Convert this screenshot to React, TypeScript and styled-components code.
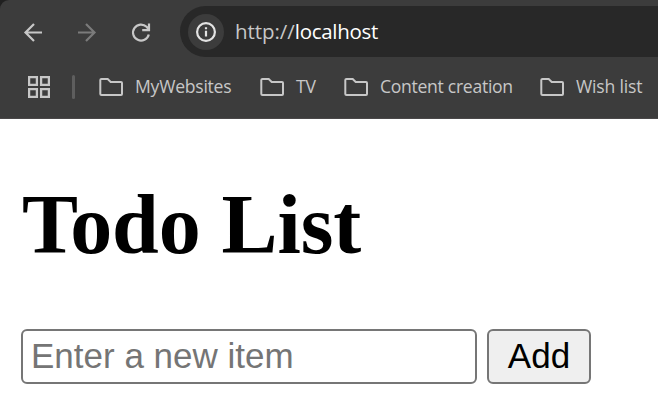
import React from "react";
import styled, { createGlobalStyle } from "styled-components";

const GlobalStyle = createGlobalStyle`
  html, body { margin: 0; background: #fff; }
  body { overflow: hidden; }
  *, *::before, *::after { box-sizing: border-box; }
`;

const Window = styled.div`
  width: 658px;
  height: 412px;
  overflow: hidden;
`;

const Chrome = styled.header`
  height: 119px;
  background: #3c3c3c;
  border-top-left-radius: 9px;
  border-bottom: 1px solid #4a4849;
  font-family: "Open Sans", "Noto Sans", sans-serif;
  overflow: hidden;
`;

const ChromeBackdrop = styled.div`
  background: #202020;
`;

const Toolbar = styled.div`
  display: flex;
  height: 57px;
  padding: 6px 0 0 20px;
`;

const NavButton = styled.span<{ $dim?: boolean }>`
  display: flex;
  align-items: center;
  width: 54px;
  height: 51px;
  color: ${(p) => (p.$dim ? "#7b7b7b" : "#c7c7c7")};
`;

const AddressBar = styled.div`
  display: flex;
  align-items: center;
  flex: 1;
  margin-left: -2px;
  padding-left: 8px;
  height: 51px;
  border-radius: 25.5px 0 0 25.5px;
  background: #282828;
`;

const SiteInfo = styled.span`
  display: flex;
  align-items: center;
  justify-content: center;
  width: 36px;
  height: 36px;
  border-radius: 50%;
  background: #3c3c3c;
  color: #e3e3e3;
`;

const Url = styled.span`
  margin-left: 11px;
  font-size: 20.5px;
  line-height: 51px;
  color: #c7c7c7;
  white-space: nowrap;
`;

const Scheme = styled.span`
  letter-spacing: -0.05px;
`;

const Host = styled.span`
  color: #fff;
  letter-spacing: -0.3px;
`;

const Bookmarks = styled.nav`
  display: flex;
  align-items: center;
  height: 60px;
  padding-left: 28px;
  color: #c7c7c7;
`;

const Divider = styled.i`
  width: 3px;
  height: 24px;
  margin: 0 24px 0 22px;
  border-radius: 1.5px;
  background: #5e5e5e;
`;

const Bookmark = styled.span<{ $width: number; $spacing: number }>`
  display: flex;
  align-items: center;
  flex: none;
  gap: 11px;
  width: ${(p) => p.$width}px;
  font-size: 17.6px;
  line-height: 24px;
  letter-spacing: ${(p) => p.$spacing}px;
  white-space: nowrap;
`;

const BookmarkLabel = styled.span`
  padding-bottom: 2px;
`;

const Page = styled.main`
  padding: 58px 21px 0;
`;

const Title = styled.h1`
  margin: 0 0 56px;
  padding-left: 1px;
  font: bold 84px/96px "Liberation Serif", "Times New Roman", serif;
  letter-spacing: -0.1px;
  color: #000;
`;

const Form = styled.form`
  display: flex;
  gap: 10px;
`;

const ItemInput = styled.input`
  width: 456px;
  height: 55px;
  padding: 0 0 1px 8px;
  border: 2px solid #767676;
  border-radius: 6px;
  background: #fff;
  outline: none;
  font: 35px/40px "Liberation Sans", Arial, sans-serif;
  &::placeholder { color: #757575; opacity: 1; }
`;

const AddButton = styled.button`
  width: 104px;
  height: 55px;
  padding: 0 0 1px;
  border: 2px solid #767676;
  border-radius: 6px;
  background: #efefef;
  color: #000;
  font: 35px/40px "Liberation Sans", Arial, sans-serif;
`;

const stroke = { fill: "none", stroke: "currentColor", strokeWidth: 2.2 };

const BackIcon = () => (
  <svg width="26" height="26" viewBox="0 0 26 26" {...stroke}>
    <path d="M22 13.5H5.5M14 4.9L5.5 13.5L14 22.1" />
  </svg>
);

const ForwardIcon = () => (
  <svg width="26" height="26" viewBox="0 0 26 26" {...stroke}>
    <path d="M4 13.5H20.5M12 4.9L20.5 13.5L12 22.1" />
  </svg>
);

const ReloadIcon = () => (
  <svg width="26" height="26" viewBox="0 0 26 26" {...stroke}>
    <path d="M20.8 15.5A8 8 0 1 1 18.6 7.8L21 10.4M21 4.4V11.2H14.2" />
    <path d="M21 7.5V11.2H17.3Z" fill="currentColor" stroke="none" />
  </svg>
);

const InfoIcon = () => (
  <svg width="22" height="22" viewBox="0 0 22 22" {...stroke}>
    <circle cx="11" cy="11" r="8.9" />
    <path d="M11 9.8V15.5M11 6.2V8.3" />
  </svg>
);

const AppsIcon = () => (
  <svg width="22" height="22" viewBox="0 0 22 22" {...stroke}>
    <path d="M1.1 1.1H8.9V8.9H1.1ZM13.1 1.1H20.9V8.9H13.1ZM1.1 13.1H8.9V20.9H1.1ZM13.1 13.1H20.9V20.9H13.1Z" strokeWidth="2.3" />
  </svg>
);

const FolderIcon = () => (
  <svg width="25" height="20" viewBox="0 0 25 20" {...stroke} strokeWidth={2}>
    <path d="M2.5 2H8.7L11.7 5H22Q23 5 23 6V17Q23 18 22 18H2.5Q1.3 18 1.3 17V3Q1.3 2 2.5 2Z" />
  </svg>
);

const folders = [
  { name: "MyWebsites", width: 161, spacing: -0.25 },
  { name: "TV", width: 84, spacing: -0.2 },
  { name: "Content creation", width: 196, spacing: -0.3 },
  { name: "Wish list", width: 110, spacing: -0.18 },
];

export default function App() {
  return (
    <Window>
      <GlobalStyle />
      <ChromeBackdrop>
        <Chrome>
          <Toolbar>
            <NavButton><BackIcon /></NavButton>
            <NavButton $dim><ForwardIcon /></NavButton>
            <NavButton><ReloadIcon /></NavButton>
            <AddressBar>
              <SiteInfo><InfoIcon /></SiteInfo>
              <Url><Scheme>http://</Scheme><Host>localhost</Host></Url>
            </AddressBar>
          </Toolbar>
          <Bookmarks>
            <AppsIcon />
            <Divider />
            {folders.map((f) => (
              <Bookmark key={f.name} $width={f.width} $spacing={f.spacing}>
                <FolderIcon />
                <BookmarkLabel>{f.name}</BookmarkLabel>
              </Bookmark>
            ))}
          </Bookmarks>
        </Chrome>
      </ChromeBackdrop>
      <Page>
        <Title>Todo List</Title>
        <Form onSubmit={(e) => e.preventDefault()}>
          <ItemInput placeholder="Enter a new item" />
          <AddButton type="submit">Add</AddButton>
        </Form>
      </Page>
    </Window>
  );
}
